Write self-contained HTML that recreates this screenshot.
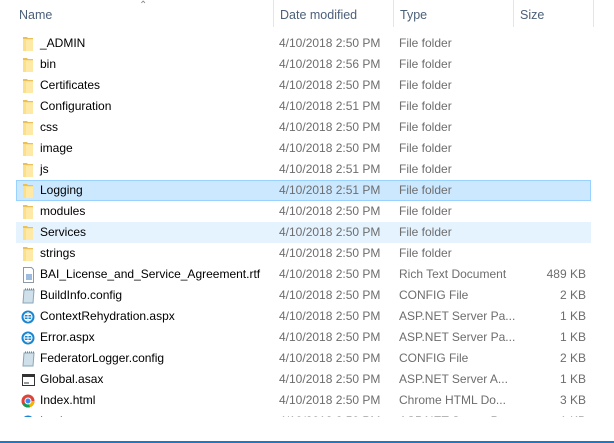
<!DOCTYPE html>
<html><head><meta charset="utf-8"><style>
*{margin:0;padding:0;box-sizing:border-box}
body{width:614px;height:443px;background:#fff;position:relative;overflow:hidden;font-family:"Liberation Sans",sans-serif;font-size:12px}
.h{position:absolute;top:8px;color:#4c607a;font-size:12.5px}
.sep{position:absolute;top:0;width:1px;height:27px;background:#e5e5e5}
.clip{position:absolute;left:0;top:33px;width:614px;height:384px;overflow:hidden}
.row{position:absolute;left:16px;width:575px;height:21px;}
.row span{position:absolute;top:3px;white-space:nowrap}
.n{left:24px;color:#000}
.d{left:263px;color:#6d6d6d}
.t{left:383px;color:#6d6d6d}
.s{right:5px;color:#6d6d6d}
.ic{position:absolute;left:5px;top:2px;width:14px;height:17px}
.sel{background:#cce8ff;border:1px solid #99d1ff}
.hov{background:#e5f3ff}
</style></head><body>
<div class="h" style="left:19px">Name</div>
<div style="position:absolute;left:139px;top:0;color:#888;font-size:10px">&#8963;</div>
<div class="sep" style="left:273px"></div>
<div class="h" style="left:280px">Date modified</div>
<div class="sep" style="left:393px"></div>
<div class="h" style="left:400px">Type</div>
<div class="sep" style="left:513px"></div>
<div class="h" style="left:520px">Size</div>
<div class="sep" style="left:593px"></div>
<div class="clip">
<svg width="0" height="0" style="position:absolute"><defs>
<g id="f"><path d="M2 2h4l1 1h5v13H2z" fill="#e8c15a"/><path d="M2 4h10v12H2z" fill="#fcdf8a"/><path d="M5 5h7v11H5z" fill="#ffe9a6"/></g>
<g id="cfg"><path d="M3 3h10l-1 13H2z" fill="#cfe0ea" stroke="#8aa4b4"/><path d="M4 2h9" stroke="#667" stroke-dasharray="1 1"/></g>
<g id="web"><circle cx="7" cy="9" r="6.5" fill="#1a86d0"/><circle cx="7" cy="9" r="4" fill="none" stroke="#fff"/><path d="M7 4v10M2.5 9h9M4 6.5h6M4 11.5h6" stroke="#fff" stroke-width=".9"/></g>
</defs></svg>
<div class="row" style="top:0"><svg class="ic"><use href="#f"/></svg><span class="n">_ADMIN</span><span class="d">4/10/2018 2:50 PM</span><span class="t">File folder</span></div>
<div class="row" style="top:21px"><svg class="ic"><use href="#f"/></svg><span class="n">bin</span><span class="d">4/10/2018 2:56 PM</span><span class="t">File folder</span></div>
<div class="row" style="top:42px"><svg class="ic"><use href="#f"/></svg><span class="n">Certificates</span><span class="d">4/10/2018 2:50 PM</span><span class="t">File folder</span></div>
<div class="row" style="top:63px"><svg class="ic"><use href="#f"/></svg><span class="n">Configuration</span><span class="d">4/10/2018 2:51 PM</span><span class="t">File folder</span></div>
<div class="row" style="top:84px"><svg class="ic"><use href="#f"/></svg><span class="n">css</span><span class="d">4/10/2018 2:50 PM</span><span class="t">File folder</span></div>
<div class="row" style="top:105px"><svg class="ic"><use href="#f"/></svg><span class="n">image</span><span class="d">4/10/2018 2:50 PM</span><span class="t">File folder</span></div>
<div class="row" style="top:126px"><svg class="ic"><use href="#f"/></svg><span class="n">js</span><span class="d">4/10/2018 2:51 PM</span><span class="t">File folder</span></div>
<div class="row sel" style="top:147px"><svg class="ic" style="left:4px;top:1px"><use href="#f"/></svg><span class="n" style="left:23px;top:2px">Logging</span><span class="d" style="left:262px;top:2px">4/10/2018 2:51 PM</span><span class="t" style="left:382px;top:2px">File folder</span></div>
<div class="row" style="top:168px"><svg class="ic"><use href="#f"/></svg><span class="n">modules</span><span class="d">4/10/2018 2:50 PM</span><span class="t">File folder</span></div>
<div class="row hov" style="top:189px"><svg class="ic"><use href="#f"/></svg><span class="n">Services</span><span class="d">4/10/2018 2:50 PM</span><span class="t">File folder</span></div>
<div class="row" style="top:210px"><svg class="ic"><use href="#f"/></svg><span class="n">strings</span><span class="d">4/10/2018 2:50 PM</span><span class="t">File folder</span></div>
<div class="row" style="top:231px"><svg class="ic"><path d="M2.5 1.5h8l2 2v13h-10z" fill="#fff" stroke="#8a9aa8"/><path d="M5 9h6M5 11h6M5 13h6" stroke="#3b78c2"/></svg><span class="n">BAI_License_and_Service_Agreement.rtf</span><span class="d">4/10/2018 2:50 PM</span><span class="t">Rich Text Document</span><span class="s">489 KB</span></div>
<div class="row" style="top:252px"><svg class="ic"><use href="#cfg"/></svg><span class="n">BuildInfo.config</span><span class="d">4/10/2018 2:50 PM</span><span class="t">CONFIG File</span><span class="s">2 KB</span></div>
<div class="row" style="top:273px"><svg class="ic"><use href="#web"/></svg><span class="n">ContextRehydration.aspx</span><span class="d">4/10/2018 2:50 PM</span><span class="t">ASP.NET Server Pa...</span><span class="s">1 KB</span></div>
<div class="row" style="top:294px"><svg class="ic"><use href="#web"/></svg><span class="n">Error.aspx</span><span class="d">4/10/2018 2:50 PM</span><span class="t">ASP.NET Server Pa...</span><span class="s">1 KB</span></div>
<div class="row" style="top:315px"><svg class="ic"><use href="#cfg"/></svg><span class="n">FederatorLogger.config</span><span class="d">4/10/2018 2:50 PM</span><span class="t">CONFIG File</span><span class="s">2 KB</span></div>
<div class="row" style="top:336px"><svg class="ic"><rect x="1.5" y="3.5" width="12" height="11" fill="#fff" stroke="#333"/><rect x="1" y="3" width="13" height="3" fill="#333"/><path d="M3 12h5" stroke="#333"/></svg><span class="n">Global.asax</span><span class="d">4/10/2018 2:50 PM</span><span class="t">ASP.NET Server A...</span><span class="s">1 KB</span></div>
<div class="row" style="top:357px"><svg class="ic"><circle cx="7" cy="9" r="6.5" fill="#db4437"/><path d="M7 9L1.4 12.3A6.5 6.5 0 0 0 9 15.2z" fill="#0f9d58"/><path d="M7 9l6.5 0A6.5 6.5 0 0 1 9 15.2z" fill="#f4b400"/><circle cx="7" cy="9" r="3" fill="#4285f4" stroke="#fff"/></svg><span class="n">Index.html</span><span class="d">4/10/2018 2:50 PM</span><span class="t">Chrome HTML Do...</span><span class="s">3 KB</span></div>
<div class="row" style="top:378px"><svg class="ic"><use href="#web"/></svg><span class="n">Login.aspx</span><span class="d">4/10/2018 2:50 PM</span><span class="t">ASP.NET Server Pa...</span><span class="s">1 KB</span></div>
</div>
<div style="position:absolute;left:0;top:441px;width:614px;height:2px;background:#1979ca"></div>
</body></html>
